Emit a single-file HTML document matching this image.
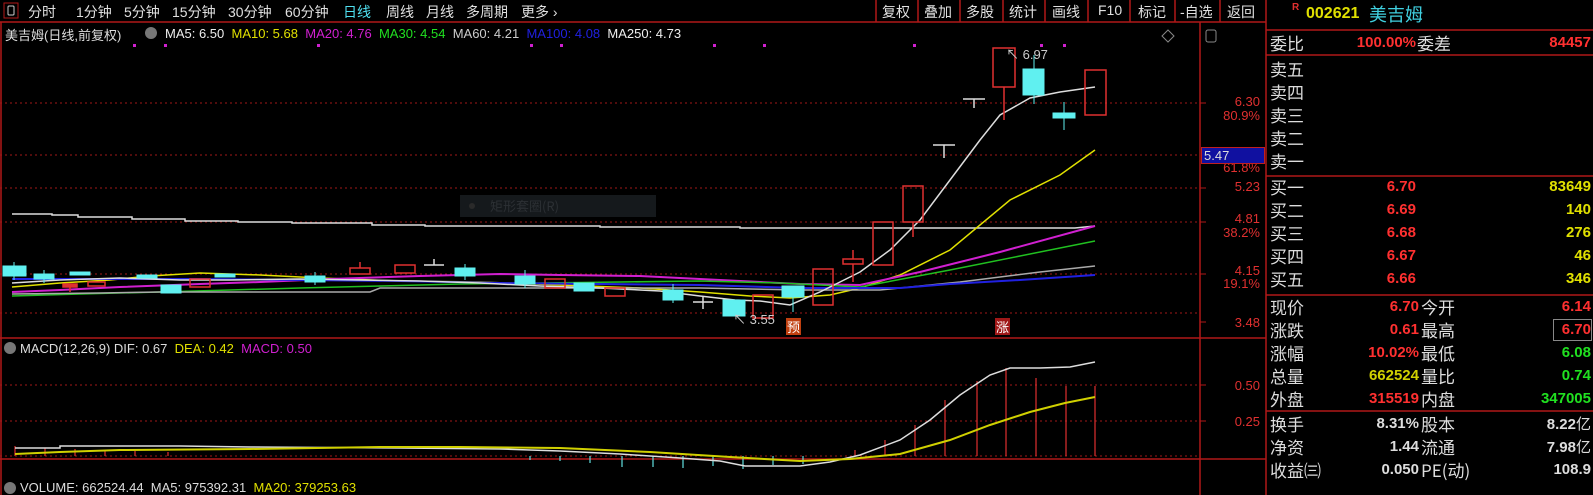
<!DOCTYPE html>
<html><head><meta charset="utf-8"><style>
*{margin:0;padding:0;box-sizing:border-box}
body{width:1593px;height:495px;background:#000;overflow:hidden;position:relative;font-family:"Liberation Sans","Noto Sans CJK SC",sans-serif;color:#ddd}
.a{position:absolute;white-space:nowrap}
.tb{font-size:14px;top:2px;color:#e0e0e0}
.lab{position:absolute;left:1270px;font-size:17px;line-height:20px;height:20px;color:#ddd;font-family:"Noto Sans CJK SC",sans-serif;white-space:nowrap}
.v{position:absolute;font-size:15px;line-height:20px;height:20px;font-weight:bold;text-align:right;font-family:"Liberation Sans",sans-serif;white-space:nowrap}
.ax{position:absolute;right:333px;font-size:13px;color:#e03030;text-align:right}
</style></head><body>
<svg class="a" style="left:0;top:0" width="1593" height="495">
<g stroke="#b01818" stroke-width="1.5" fill="none">
<line x1="0" y1="22" x2="1266" y2="22"/>
<line x1="0" y1="338" x2="1266" y2="338"/>
<line x1="0" y1="459" x2="1266" y2="459"/>
<line x1="1200" y1="22" x2="1200" y2="495"/>
<line x1="1266" y1="0" x2="1266" y2="495"/>
<line x1="1266" y1="30" x2="1593" y2="30"/>
<line x1="1266" y1="55" x2="1593" y2="55"/>
<line x1="1266" y1="176" x2="1593" y2="176"/>
<line x1="1266" y1="295" x2="1593" y2="295"/>
<line x1="1266" y1="411" x2="1593" y2="411"/>
<line x1="1" y1="22" x2="1" y2="495"/>
<line x1="876" y1="0" x2="876" y2="22"/><line x1="918" y1="0" x2="918" y2="22"/><line x1="960" y1="0" x2="960" y2="22"/><line x1="1003" y1="0" x2="1003" y2="22"/><line x1="1045" y1="0" x2="1045" y2="22"/><line x1="1088" y1="0" x2="1088" y2="22"/><line x1="1130" y1="0" x2="1130" y2="22"/><line x1="1175" y1="0" x2="1175" y2="22"/><line x1="1220" y1="0" x2="1220" y2="22"/>
</g>
<g stroke="#a01818" stroke-width="1" stroke-dasharray="2,3">
<line x1="0" y1="103" x2="1200" y2="103"/><line x1="0" y1="155" x2="1200" y2="155"/><line x1="0" y1="188" x2="1200" y2="188"/><line x1="0" y1="222" x2="1200" y2="222"/><line x1="0" y1="274" x2="1200" y2="274"/><line x1="0" y1="313" x2="1200" y2="313"/>
<line x1="0" y1="385" x2="1200" y2="385"/><line x1="0" y1="421" x2="1200" y2="421"/><line x1="0" y1="456" x2="1200" y2="456"/>
</g>
<g stroke="#b01818"><line x1="1200" y1="103" x2="1206" y2="103"/><line x1="1200" y1="188" x2="1206" y2="188"/><line x1="1200" y1="222" x2="1206" y2="222"/><line x1="1200" y1="274" x2="1206" y2="274"/><line x1="1200" y1="322" x2="1206" y2="322"/><line x1="1200" y1="385" x2="1206" y2="385"/><line x1="1200" y1="421" x2="1206" y2="421"/></g>
<rect x="4" y="3" width="14" height="15" fill="none" stroke="#b01818"/><rect x="8" y="6" width="6" height="9" rx="1" fill="none" stroke="#ccc"/>
<rect x="1206" y="30" width="10" height="12" rx="2" fill="none" stroke="#888"/>
<path d="M1168 30l6 6-6 6-6-6z" fill="none" stroke="#888"/>
<g fill="#d020d0"><rect x="133" y="44" width="3" height="3"/><rect x="164" y="44" width="3" height="3"/><rect x="317" y="44" width="3" height="3"/><rect x="530" y="44" width="3" height="3"/><rect x="560" y="44" width="3" height="3"/><rect x="713" y="44" width="3" height="3"/><rect x="763" y="44" width="3" height="3"/><rect x="913" y="44" width="3" height="3"/><rect x="1040" y="44" width="3" height="3"/><rect x="1063" y="44" width="3" height="3"/></g>
<rect x="460" y="195" width="196" height="22" fill="#15191c"/>
<circle cx="472" cy="206" r="3" fill="#2a2a2a"/>
<text x="490" y="211" font-size="13" fill="#2c3034" font-family="Noto Sans CJK SC">矩形套圈(R)</text>
<polyline fill="none" stroke="#ddd" stroke-width="1.5" points="12,214 52,214 52,215 78,215 78,217 132,217 132,219 185,219 185,221 238,221 238,222 292,222 292,223 372,223 372,225 425,225 425,226 600,226 600,227 740,227 740,228 1075,228 1095,226"/>
<polyline fill="none" stroke="#e0e000" stroke-width="1.5" points="12,287 60,283 110,280 150,276 200,273 260,275 320,278 400,281 480,282 560,285 640,288 700,292 750,296 790,298 830,295 860,288"/>
<polyline fill="none" stroke="#e0e000" stroke-width="1.5" points="860,288 900,275 950,250 1010,200 1060,175 1095,150"/>
<polyline fill="none" stroke="#d020d0" stroke-width="2" points="12,292 60,290 120,287 200,284 260,282 330,279 420,276 500,274 560,275 640,276 720,280 800,284 860,285 920,272 1000,252 1095,226"/>
<polyline fill="none" stroke="#20c020" stroke-width="1.5" points="12,296 80,294 160,292 230,290 300,288 380,286 460,284 540,283 620,282 700,281 780,283 860,287 950,270 1020,256 1095,241"/>
<polyline fill="none" stroke="#aaa" stroke-width="1.5" points="12,294 100,293 160,292 370,292 380,288 600,288 700,288 800,290 880,290 960,282 1040,272 1095,266"/>
<polyline fill="none" stroke="#2020e0" stroke-width="2" points="12,279 100,279 200,279 300,280 400,281 500,283 600,284 700,285 800,288 900,288 950,284 1020,280 1095,275"/>
<polyline fill="none" stroke="#ddd" stroke-width="1.5" points="12,283 60,280 120,278 180,280 230,280 300,279 360,280 420,281 480,283 540,286 600,288 660,291 700,296 735,300 760,301 790,305 820,292 860,272 890,250 920,220 950,180 980,140 1000,115 1030,98 1060,92 1095,87"/>
<g fill="#60f0f0" stroke="#60f0f0">
<rect x="3" y="266" width="23" height="10"/><line x1="14" y1="262" x2="14" y2="280"/>
<rect x="34" y="274" width="20" height="5"/><line x1="44" y1="270" x2="44" y2="283"/>
<rect x="70" y="272" width="20" height="3"/>
<rect x="137" y="275" width="20" height="3"/>
<rect x="161" y="285" width="20" height="8"/>
<rect x="215" y="274" width="20" height="3"/>
<rect x="305" y="276" width="20" height="6"/><line x1="315" y1="272" x2="315" y2="285"/>
<rect x="455" y="268" width="20" height="8"/><line x1="465" y1="264" x2="465" y2="280"/>
<rect x="515" y="276" width="20" height="8"/><line x1="525" y1="270" x2="525" y2="288"/>
<rect x="574" y="283" width="20" height="8"/>
<rect x="663" y="290" width="20" height="10"/><line x1="673" y1="284" x2="673" y2="303"/>
<rect x="723" y="300" width="22" height="16"/>
<rect x="782" y="286" width="22" height="11"/><line x1="793" y1="297" x2="793" y2="312"/>
<rect x="1023" y="69" width="21" height="26"/><line x1="1034" y1="55" x2="1034" y2="104"/>
<rect x="1053" y="113" width="22" height="5"/><line x1="1064" y1="102" x2="1064" y2="130"/>
</g>
<g fill="none" stroke="#e03030" stroke-width="1.5">
<rect x="63" y="284" width="14" height="3" fill="#e03030"/><line x1="70" y1="287" x2="70" y2="292"/>
<rect x="88" y="282" width="17" height="4"/>
<rect x="190" y="279" width="20" height="8"/>
<rect x="350" y="268" width="20" height="6"/><line x1="360" y1="262" x2="360" y2="268"/>
<rect x="395" y="265" width="20" height="8"/>
<rect x="545" y="279" width="20" height="9"/>
<rect x="605" y="288" width="20" height="8"/>
<rect x="753" y="295" width="20" height="23"/>
<rect x="813" y="269" width="20" height="36"/>
<rect x="843" y="259" width="20" height="5"/><line x1="853" y1="250" x2="853" y2="259"/><line x1="853" y1="264" x2="853" y2="282"/>
<rect x="873" y="222" width="20" height="43"/>
<rect x="903" y="186" width="20" height="36"/><line x1="913" y1="222" x2="913" y2="237"/>
<rect x="993" y="48" width="22" height="39"/><line x1="1004" y1="87" x2="1004" y2="120"/>
<rect x="1085" y="70" width="21" height="45"/>
</g>
<g stroke="#ddd" stroke-width="1.5">
<line x1="424" y1="265" x2="444" y2="265"/><line x1="434" y1="259" x2="434" y2="265"/>
<line x1="693" y1="302" x2="713" y2="302"/><line x1="703" y1="296" x2="703" y2="309"/>
<line x1="933" y1="145" x2="955" y2="145"/><line x1="944" y1="145" x2="944" y2="158"/>
<line x1="963" y1="99" x2="985" y2="99"/><line x1="974" y1="99" x2="974" y2="108"/>
</g>
<text x="733" y="324" font-size="13" fill="#ccc">↖ 3.55</text>
<text x="1006" y="59" font-size="13" fill="#ccc">↖ 6.97</text>
<rect x="786" y="318" width="15" height="17" fill="#c04010"/><text x="787" y="332" font-size="13" fill="#fff" font-family="Noto Sans CJK SC">预</text>
<rect x="995" y="318" width="15" height="17" fill="#a01818"/><text x="996" y="332" font-size="13" fill="#fff" font-family="Noto Sans CJK SC">涨</text>
<g stroke="#e03030" stroke-width="1.2">
<line x1="15" y1="456" x2="15" y2="446"/><line x1="45" y1="456" x2="45" y2="448"/><line x1="75" y1="456" x2="75" y2="449"/><line x1="105" y1="456" x2="105" y2="450"/><line x1="135" y1="456" x2="135" y2="451"/><line x1="168" y1="456" x2="168" y2="452"/>
<line x1="855" y1="456" x2="855" y2="450"/><line x1="885" y1="456" x2="885" y2="440"/><line x1="915" y1="456" x2="915" y2="425"/><line x1="945" y1="456" x2="945" y2="400"/><line x1="977" y1="456" x2="977" y2="381"/><line x1="1006" y1="456" x2="1006" y2="368"/><line x1="1036" y1="456" x2="1036" y2="378"/><line x1="1066" y1="456" x2="1066" y2="386"/><line x1="1095" y1="456" x2="1095" y2="386"/>
</g>
<g stroke="#60e0e0" stroke-width="1.2">
<line x1="530" y1="456" x2="530" y2="460"/><line x1="560" y1="456" x2="560" y2="461"/><line x1="590" y1="456" x2="590" y2="463"/><line x1="622" y1="456" x2="622" y2="467"/><line x1="653" y1="456" x2="653" y2="467"/><line x1="683" y1="456" x2="683" y2="468"/><line x1="713" y1="456" x2="713" y2="466"/><line x1="743" y1="456" x2="743" y2="469"/><line x1="773" y1="456" x2="773" y2="465"/><line x1="803" y1="456" x2="803" y2="464"/>
</g>
<polyline fill="none" stroke="#ddd" stroke-width="1.5" points="15,448 60,448 60,446 180,446 250,447 400,448 500,449 560,451 620,454 680,458 720,461 745,466 800,466 830,462 860,455 900,440 930,420 960,395 990,375 1010,368 1040,368 1070,367 1095,362"/>
<polyline fill="none" stroke="#d0d000" stroke-width="2" points="15,454 60,452 120,450 250,449 380,447 460,447 560,448 650,452 730,457 800,461 850,459 900,454 950,440 990,425 1030,412 1065,403 1095,397"/>
<circle cx="10" cy="348" r="6" fill="#777"/><circle cx="10" cy="488" r="6" fill="#777"/><circle cx="151" cy="33" r="6" fill="#777"/>
</svg>
<div class="a tb" style="left:28px">分时</div><div class="a tb" style="left:76px">1分钟</div><div class="a tb" style="left:124px">5分钟</div><div class="a tb" style="left:172px">15分钟</div><div class="a tb" style="left:228px">30分钟</div><div class="a tb" style="left:285px">60分钟</div><div class="a tb" style="left:343px;color:#50e0f0">日线</div><div class="a tb" style="left:386px">周线</div><div class="a tb" style="left:426px">月线</div><div class="a tb" style="left:466px">多周期</div><div class="a tb" style="left:521px">更多 ›</div>
<div class="a tb" style="left:882px">复权</div><div class="a tb" style="left:924px">叠加</div><div class="a tb" style="left:966px">多股</div><div class="a tb" style="left:1009px">统计</div><div class="a tb" style="left:1052px">画线</div><div class="a tb" style="left:1098px">F10</div><div class="a tb" style="left:1138px">标记</div><div class="a tb" style="left:1180px">-自选</div><div class="a tb" style="left:1227px">返回</div>
<div class="a" style="left:5px;top:25px;font-size:13px;color:#ddd">美吉姆(日线,前复权)</div>
<div class="a" style="left:165px;top:26px;font-size:13px"><span style="color:#eee">MA5: 6.50</span>&nbsp; <span style="color:#e0e000">MA10: 5.68</span>&nbsp; <span style="color:#d020d0">MA20: 4.76</span>&nbsp; <span style="color:#20e020">MA30: 4.54</span>&nbsp; <span style="color:#ccc">MA60: 4.21</span>&nbsp; <span style="color:#2020e0">MA100: 4.08</span>&nbsp; <span style="color:#eee">MA250: 4.73</span></div>
<div class="a" style="left:20px;top:341px;font-size:13px"><span style="color:#ddd">MACD(12,26,9) DIF: 0.67</span>&nbsp; <span style="color:#e0e000">DEA: 0.42</span>&nbsp; <span style="color:#d020d0">MACD: 0.50</span></div>
<div class="a" style="left:20px;top:480px;font-size:13px"><span style="color:#ddd">VOLUME: 662524.44 &nbsp;MA5: 975392.31</span>&nbsp; <span style="color:#e0e000">MA20: 379253.63</span></div>
<div class="ax" style="top:94px">6.30</div><div class="ax" style="top:108px">80.9%</div>
<div class="ax" style="top:160px">61.8%</div>
<div class="a" style="left:1201px;top:147px;width:64px;height:17px;background:#1010a0;border:1px solid #c02020;color:#ddd;font-size:13px;padding-left:2px">5.47</div>
<div class="ax" style="top:179px">5.23</div><div class="ax" style="top:211px">4.81</div><div class="ax" style="top:225px">38.2%</div>
<div class="ax" style="top:263px">4.15</div><div class="ax" style="top:276px">19.1%</div><div class="ax" style="top:315px">3.48</div>
<div class="ax" style="top:378px">0.50</div><div class="ax" style="top:414px">0.25</div>
<div class="a" style="left:1292px;top:2px;font-size:10px;color:#e03030;font-weight:bold">R</div>
<div class="a" style="left:1306px;top:5px;font-size:16px;color:#e0e000;font-weight:bold">002621</div>
<div class="a" style="left:1369px;top:3px;font-size:18px;line-height:22px;color:#40d0e0;font-family:'Noto Sans CJK SC',sans-serif">美吉姆</div>
<div class="lab" style="top:33px">委比</div><div class="v" style="left:1320px;width:96px;top:33px;color:#ff3030">100.00%</div><div class="lab" style="left:1417px;top:33px">委差</div><div class="v" style="left:1480px;width:111px;top:33px;color:#ff3030">84457</div>
<div class="lab" style="top:59px">卖五</div><div class="lab" style="top:82px">卖四</div><div class="lab" style="top:105px">卖三</div><div class="lab" style="top:128px">卖二</div><div class="lab" style="top:151px">卖一</div>
<div class="lab" style="top:177px">买一</div><div class="lab" style="top:200px">买二</div><div class="lab" style="top:223px">买三</div><div class="lab" style="top:246px">买四</div><div class="lab" style="top:269px">买五</div>
<div class="v" style="left:1370px;width:46px;top:177px;color:#ff3030">6.70</div><div class="v" style="left:1480px;width:111px;top:177px;color:#e0e000">83649</div>
<div class="v" style="left:1370px;width:46px;top:200px;color:#ff3030">6.69</div><div class="v" style="left:1480px;width:111px;top:200px;color:#e0e000">140</div>
<div class="v" style="left:1370px;width:46px;top:223px;color:#ff3030">6.68</div><div class="v" style="left:1480px;width:111px;top:223px;color:#e0e000">276</div>
<div class="v" style="left:1370px;width:46px;top:246px;color:#ff3030">6.67</div><div class="v" style="left:1480px;width:111px;top:246px;color:#e0e000">46</div>
<div class="v" style="left:1370px;width:46px;top:269px;color:#ff3030">6.66</div><div class="v" style="left:1480px;width:111px;top:269px;color:#e0e000">346</div>
<div class="lab" style="top:297px">现价</div><div class="lab" style="top:320px">涨跌</div><div class="lab" style="top:343px">涨幅</div><div class="lab" style="top:366px">总量</div><div class="lab" style="top:389px">外盘</div>
<div class="lab" style="left:1421px;top:297px">今开</div><div class="lab" style="left:1421px;top:320px">最高</div><div class="lab" style="left:1421px;top:343px">最低</div><div class="lab" style="left:1421px;top:366px">量比</div><div class="lab" style="left:1421px;top:389px">内盘</div>
<div class="v" style="left:1320px;width:99px;top:297px;color:#ff3030">6.70</div><div class="v" style="left:1480px;width:111px;top:297px;color:#ff3030">6.14</div>
<div class="v" style="left:1320px;width:99px;top:320px;color:#ff3030">0.61</div><div class="a" style="left:1553px;top:319px;width:39px;height:22px;border:1px solid #888"></div><div class="v" style="left:1480px;width:111px;top:320px;color:#ff3030">6.70</div>
<div class="v" style="left:1320px;width:99px;top:343px;color:#ff3030">10.02%</div><div class="v" style="left:1480px;width:111px;top:343px;color:#20e020">6.08</div>
<div class="v" style="left:1320px;width:99px;top:366px;color:#d0d000">662524</div><div class="v" style="left:1480px;width:111px;top:366px;color:#20e020">0.74</div>
<div class="v" style="left:1320px;width:99px;top:389px;color:#ff3030">315519</div><div class="v" style="left:1480px;width:111px;top:389px;color:#20e020">347005</div>
<div class="lab" style="top:414px">换手</div><div class="lab" style="top:437px">净资</div><div class="lab" style="top:460px">收益㈢</div>
<div class="lab" style="left:1421px;top:414px">股本</div><div class="lab" style="left:1421px;top:437px">流通</div><div class="lab" style="left:1421px;top:460px">PE(动)</div>
<div class="v" style="left:1320px;width:99px;top:414px;color:#ddd">8.31%</div><div class="v" style="left:1480px;width:111px;top:414px;color:#ddd">8.22<span style="font-weight:normal;font-family:'Noto Sans CJK SC'">亿</span></div>
<div class="v" style="left:1320px;width:99px;top:437px;color:#ddd">1.44</div><div class="v" style="left:1480px;width:111px;top:437px;color:#ddd">7.98<span style="font-weight:normal;font-family:'Noto Sans CJK SC'">亿</span></div>
<div class="v" style="left:1320px;width:99px;top:460px;color:#ddd">0.050</div><div class="v" style="left:1480px;width:111px;top:460px;color:#ddd">108.9</div>
</body></html>
